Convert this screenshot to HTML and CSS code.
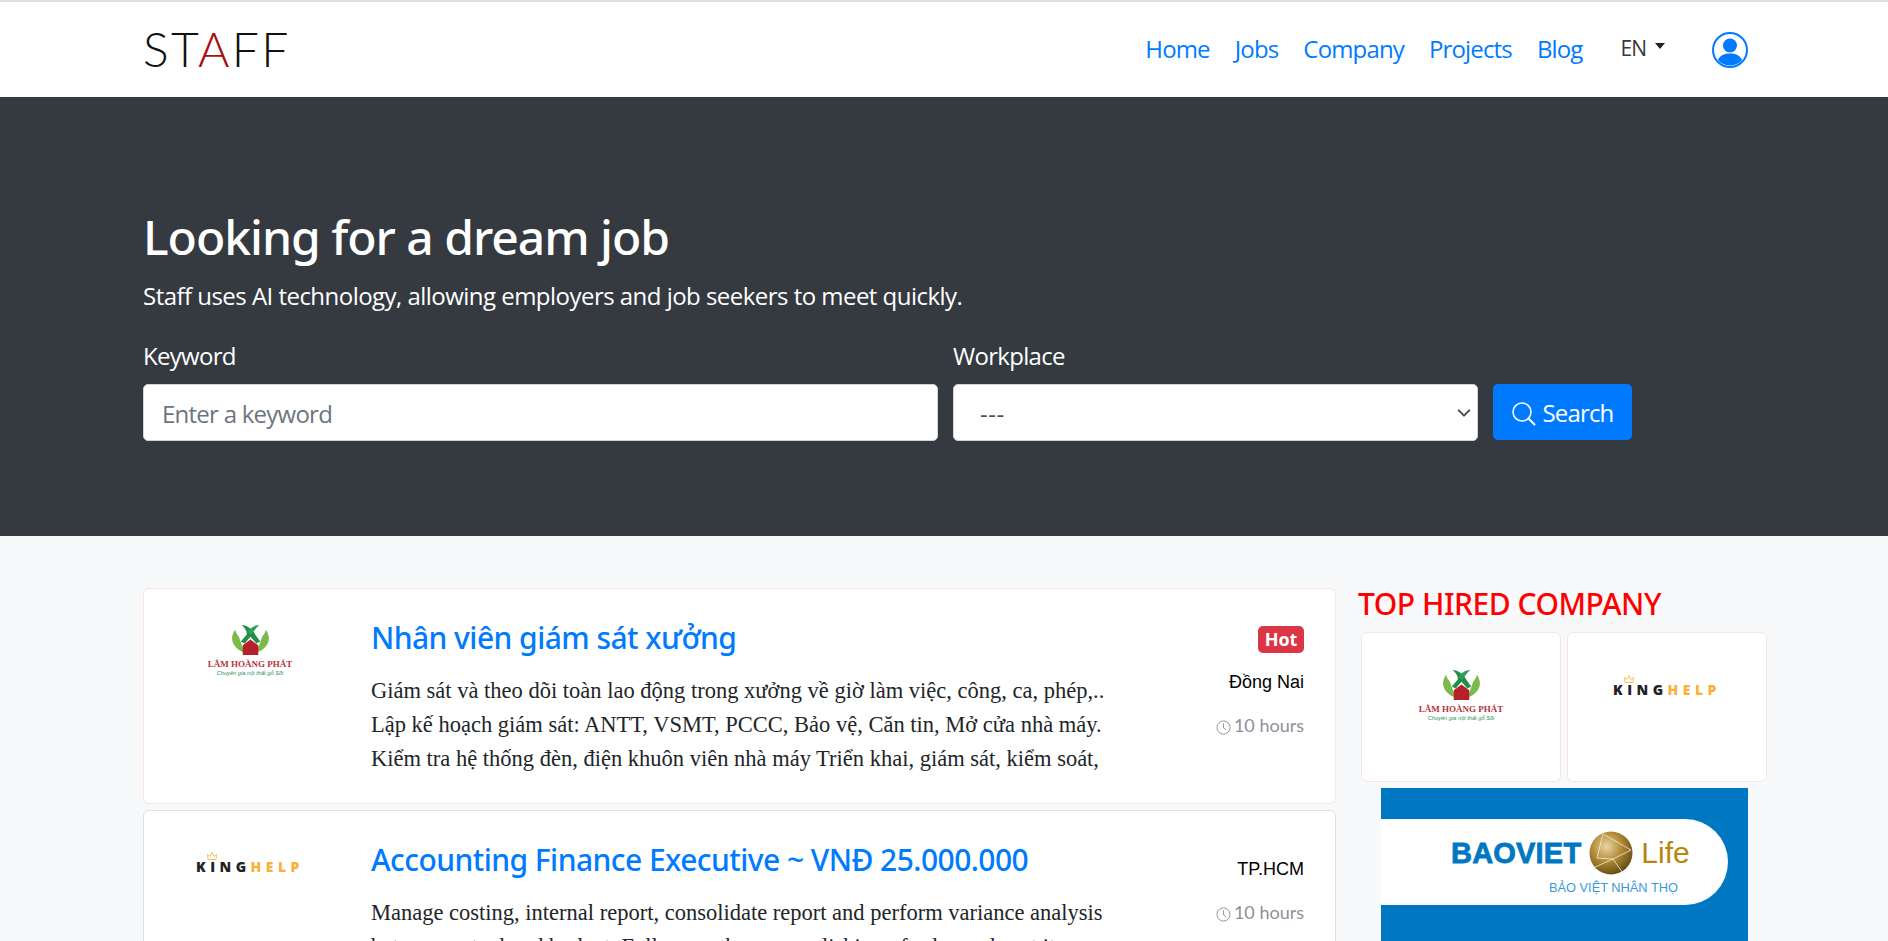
FILE: index.html
```html
<!DOCTYPE html>
<html>
<head>
    <title>Staff</title>
    <link rel="stylesheet" href="styles.css">
</head>
<body>
<nav class="navbar">
    <div class="container nav-inner">
        <a class="brand">ST<span class="brand-red">A</span>FF</a>
        <ul class="nav-links">
            <li><a>Home</a></li>
            <li><a>Jobs</a></li>
            <li><a>Company</a></li>
            <li><a>Projects</a></li>
            <li><a>Blog</a></li>
        </ul>
        <div class="lang">EN<span class="caret"></span></div>
        <svg class="user-icon" viewBox="0 0 36 36">
            <circle cx="18" cy="18" r="17" fill="#fff" stroke="#007bff" stroke-width="2"/>
            <circle cx="18" cy="13.500" r="7" fill="#007bff"/>
            <path d="M6 28c2-5 6.500-6.500 12-6.500s10 1.500 12 6.500c-3 3.600-7.300 5.500-12 5.500s-9-1.900-12-5.500z" fill="#007bff"/>
        </svg>
    </div>
</nav>

<section class="hero">
    <div class="container">
        <h1>Looking for a dream job</h1>
        <p class="lead">Staff uses AI technology, allowing employers and job seekers to meet quickly.</p>
        <form class="search-form">
            <div class="field field-keyword">
                <label>Keyword</label>
                <div class="control placeholder">Enter a keyword</div>
            </div>
            <div class="field field-place">
                <label>Workplace</label>
                <div class="control select">
                    <span>---</span>
                    <svg class="chevron" viewBox="0 0 16 16"><path d="M2 5l6 6 6-6" fill="none" stroke="#495057" stroke-width="2.400" stroke-linecap="round" stroke-linejoin="round"/></svg>
                </div>
            </div>
            <button type="button" class="search-btn">
                <svg viewBox="0 0 24 24"><circle cx="10" cy="10" r="9" fill="none" stroke="#fff" stroke-width="1.500"/><path d="M16.500 16.500l6 6" stroke="#fff" stroke-width="2" stroke-linecap="round"/></svg>
                Search
            </button>
        </form>
    </div>
</section>

<main class="container content">
    <div class="job-list">
        <div class="job-card job-card-hot">
            <div class="job-logo">
                <div class="logo-lhp">
                    <svg class="lhp-mark" viewBox="0 0 40 32">
                        <path d="M15 29C8 27 2 22 1 15c-.3-3 1-7 3-10 1 3 2 5 4 7 2 6 4 12 7 17z" fill="#7cba4a"/>
                        <path d="M25 29c7-2 13-7 14-14 .3-3-1-7-3-10-1 3-2 5-4 7-2 6-4 12-7 17z" fill="#7cba4a"/>
                        <path d="M11 0c5 0 11 4 14 10l5 7-4 2-6-7-6 7-4-2 6-7C17 7 14 3 11 0z" fill="#1f8f4b"/>
                        <path d="M29 0c-5 0-9 3-12 7l3 3 3-3c2-3 4-5 6-7z" fill="#2fa155"/>
                        <path d="M20 15l8 6v10H12V21z" fill="#b5202a"/>
                    </svg>
                    <span class="lhp-name">LÂM HOÀNG PHÁT</span>
                    <span class="lhp-tag">Chuyên gia nội thất gỗ Sồi</span>
                </div>
            </div>
            <div class="job-body">
                <h3><a>Nhân viên giám sát xưởng</a></h3>
                <p>Giám sát và theo dõi toàn lao động trong xưởng về giờ làm việc, công, ca, phép,..<br>
                Lập kế hoạch giám sát: ANTT, VSMT, PCCC, Bảo vệ, Căn tin, Mở cửa nhà máy.<br>
                Kiểm tra hệ thống đèn, điện khuôn viên nhà máy Triển khai, giám sát, kiểm soát,</p>
            </div>
            <div class="job-meta">
                <span class="badge">Hot</span>
                <span class="place">Đồng Nai</span>
                <span class="ago">
                    <svg viewBox="0 0 16 16"><circle cx="8" cy="8" r="7" fill="none" stroke="#8f8f99" stroke-width="1"/><path d="M8 3.500V8.500l3 2" fill="none" stroke="#8f8f99"/></svg>
                    10 hours
                </span>
            </div>
        </div>
        <div class="job-card">
            <div class="job-logo">
                <div class="logo-king">
                    <svg class="crown" viewBox="0 0 10 8"><path d="M1 7.500L.5 2.500l2.500 2L5 .5l2 4 2.500-2L9 7.500z" fill="none" stroke="#fbb03b" stroke-width="0.800"/></svg>
                    KING<span class="king-help">HELP</span>
                </div>
            </div>
            <div class="job-body">
                <h3><a>Accounting Finance Executive ~ VNĐ 25.000.000</a></h3>
                <p>Manage costing, internal report, consolidate report and perform variance analysis<br>
                between actual and budget. Follow up the accomplishing of sales and cost item</p>
            </div>
            <div class="job-meta">
                <span class="place">TP.HCM</span>
                <span class="ago">
                    <svg viewBox="0 0 16 16"><circle cx="8" cy="8" r="7" fill="none" stroke="#8f8f99" stroke-width="1"/><path d="M8 3.500V8.500l3 2" fill="none" stroke="#8f8f99"/></svg>
                    10 hours
                </span>
            </div>
        </div>
    </div>

    <aside class="sidebar">
        <h4>TOP HIRED COMPANY</h4>
        <div class="company-grid">
            <div class="company-card">
                <div class="logo-lhp">
                    <svg class="lhp-mark" viewBox="0 0 40 32">
                        <path d="M15 29C8 27 2 22 1 15c-.3-3 1-7 3-10 1 3 2 5 4 7 2 6 4 12 7 17z" fill="#7cba4a"/>
                        <path d="M25 29c7-2 13-7 14-14 .3-3-1-7-3-10-1 3-2 5-4 7-2 6-4 12-7 17z" fill="#7cba4a"/>
                        <path d="M11 0c5 0 11 4 14 10l5 7-4 2-6-7-6 7-4-2 6-7C17 7 14 3 11 0z" fill="#1f8f4b"/>
                        <path d="M29 0c-5 0-9 3-12 7l3 3 3-3c2-3 4-5 6-7z" fill="#2fa155"/>
                        <path d="M20 15l8 6v10H12V21z" fill="#b5202a"/>
                    </svg>
                    <span class="lhp-name">LÂM HOÀNG PHÁT</span>
                    <span class="lhp-tag">Chuyên gia nội thất gỗ Sồi</span>
                </div>
            </div>
            <div class="company-card">
                <div class="logo-king">
                    <svg class="crown" viewBox="0 0 10 8"><path d="M1 7.500L.5 2.500l2.500 2L5 .5l2 4 2.500-2L9 7.500z" fill="none" stroke="#fbb03b" stroke-width="0.800"/></svg>
                    KING<span class="king-help">HELP</span>
                </div>
            </div>
        </div>
        <div class="banner">
            <div class="banner-pill">
                <div class="bv-row">
                    <span class="bv-name">BAOVIET</span>
                    <svg class="bv-globe" viewBox="0 0 44 44">
                        <defs>
                            <radialGradient id="globe" cx="40%" cy="35%" r="70%">
                                <stop offset="0" stop-color="#ead6a4"/>
                                <stop offset="0.500" stop-color="#b08a35"/>
                                <stop offset="1" stop-color="#5f4712"/>
                            </radialGradient>
                        </defs>
                        <circle cx="22" cy="22" r="21.500" fill="url(#globe)"/>
                        <path d="M14 3l28 16-18 9-20 9M14 3l-6 24 16 1 10 14" fill="none" stroke="#f4ecd6" stroke-width="0.800"/>
                    </svg>
                    <span class="bv-life">Life</span>
                </div>
                <div class="bv-sub">BẢO VIỆT NHÂN THỌ</div>
            </div>
        </div>
    </aside>
</main>
</body>
</html>
```

FILE: styles.css
```css
* {
    box-sizing: border-box;
}

html, body {
    height: 941px;
    margin: 0;
    padding: 0;
    overflow: hidden;
}

body {
    background: #f8f9fa;
    font-family: "Open Sans", "Noto Sans", Arial, sans-serif;
    font-size: 24px;
    color: #212529;
}

.container {
    width: 1888px;
    padding: 0 120px 0 143px;
}

/* top nav */
.navbar {
    height: 97px;
    background: #fff;
    border-top: 2px solid #e0e0e0;
}

.nav-inner {
    display: flex;
    align-items: center;
    height: 95px;
}

.brand {
    font-family: Lato, "Open Sans", sans-serif;
    font-weight: 300;
    font-size: 48px;
    line-height: 1;
    letter-spacing: 2.400px;
    color: #111;
    margin-top: -1px;
}

.brand-red {
    color: #a80f0f;
}

.nav-links {
    display: flex;
    gap: 25px;
    list-style: none;
    margin: -2px 0 0 auto;
    padding: 0;
}

.nav-links a {
    color: #007bff;
    font-size: 24px;
    letter-spacing: -0.850px;
}

.lang {
    display: flex;
    align-items: center;
    margin-left: 38px;
    margin-top: -4px;
    font-size: 21px;
    letter-spacing: -1px;
    color: #343a40;
}

.caret {
    margin-left: 9px;
    margin-top: -3px;
    border-top: 6px solid #212529;
    border-left: 5.500px solid transparent;
    border-right: 5.500px solid transparent;
}

.user-icon {
    width: 36px;
    height: 36px;
    margin-left: 47px;
    margin-right: 20px;
}

/* hero */
.hero {
    height: 439px;
    background: #343a40;
    color: #fff;
    padding-top: 112px;
}

.hero h1 {
    margin: 0;
    font-family: "Noto Sans", "Open Sans", sans-serif;
    font-size: 48px;
    line-height: 56px;
    font-weight: 500;
    letter-spacing: -1.030px;
}

.lead {
    margin: 13px 0 0;
    font-size: 24px;
    line-height: 36px;
    letter-spacing: -0.530px;
}

.search-form {
    display: flex;
    align-items: flex-end;
    gap: 15px;
    margin-top: 24px;
}

.field label {
    display: block;
    font-size: 24px;
    line-height: 36px;
    margin-bottom: 10px;
    letter-spacing: -0.700px;
}

.field-keyword {
    width: 795px;
}

.field-place {
    width: 525px;
}

.control {
    display: flex;
    align-items: center;
    justify-content: space-between;
    height: 57px;
    padding: 1px 6px 0 18px;
    background: #fff;
    border: 1px solid #ced4da;
    border-radius: 5px;
    font-size: 24px;
    letter-spacing: -0.750px;
    color: #495057;
}

.select {
    padding-left: 26px;
    letter-spacing: 0.500px;
}

.placeholder {
    color: #6c757d;
}

.chevron {
    width: 14px;
    height: 14px;
}

.search-btn {
    display: flex;
    align-items: center;
    justify-content: center;
    gap: 7px;
    width: 139px;
    height: 56px;
    margin-bottom: 1px;
    background: #007bff;
    border: none;
    border-radius: 5px;
    color: #fff;
    font-family: inherit;
    font-size: 24px;
    letter-spacing: -0.850px;
}

.search-btn svg {
    width: 24px;
    height: 24px;
    margin-top: 3px;
}

/* job list */
.content {
    display: flex;
    align-items: flex-start;
    padding-top: 52px;
}

.job-list {
    display: flex;
    flex-direction: column;
    gap: 6px;
    width: 1193px;
    flex-shrink: 0;
}

.job-card {
    display: flex;
    height: 240px;
    background: #fff;
    border: 1px solid #dfdfdf;
    border-radius: 6px;
}

.job-card-hot {
    height: 216px;
    border-color: #fbe3e3;
}

.job-logo {
    display: flex;
    justify-content: center;
    width: 212px;
    margin-right: 15px;
    padding-top: 36px;
    flex-shrink: 0;
}

.job-body {
    flex: 1;
    padding-top: 28px;
    white-space: nowrap;
}

.job-body h3 {
    margin: 0;
    font-family: "Noto Sans", "Open Sans", sans-serif;
    font-size: 30px;
    line-height: 42px;
    font-weight: 500;
    letter-spacing: -0.550px;
}

.job-body a {
    color: #007bff;
}

.job-body p {
    margin: 15px 0 0;
    font-family: "Liberation Serif", "Times New Roman", serif;
    font-size: 22.500px;
    line-height: 34px;
}

.job-meta {
    display: flex;
    flex-direction: column;
    align-items: flex-end;
    width: 200px;
    padding: 45px 31px 0 0;
    flex-shrink: 0;
}

.job-card-hot .job-meta {
    padding-top: 37px;
}

.badge {
    width: 46px;
    height: 27px;
    line-height: 26px;
    text-align: center;
    background: #dc3545;
    border-radius: 5px;
    color: #fff;
    font-size: 18px;
    font-weight: 700;
    margin-bottom: 16px;
}

.place {
    font-family: "Liberation Sans", Arial, sans-serif;
    font-size: 18px;
    line-height: 27px;
    color: #000;
}

.ago {
    display: flex;
    align-items: center;
    gap: 3px;
    margin-top: 16px;
    font-family: Lato, sans-serif;
    font-size: 18px;
    line-height: 27px;
    color: #8f8f99;
}

.ago svg {
    width: 15px;
    height: 15px;
    margin-top: 3px;
}

/* logos */
.logo-lhp {
    display: flex;
    flex-direction: column;
    align-items: center;
    width: 90px;
}

.lhp-mark {
    width: 39px;
    height: 31px;
}

.lhp-name {
    font-family: "Liberation Serif", serif;
    font-size: 9px;
    line-height: 11px;
    font-weight: 700;
    color: #b5343c;
    white-space: nowrap;
    margin-top: 3px;
}

.lhp-tag {
    font-family: "Liberation Sans", sans-serif;
    font-size: 5.700px;
    line-height: 6px;
    font-style: italic;
    color: #2f8f5b;
    white-space: nowrap;
}

.logo-king {
    position: relative;
    height: 22px;
    margin-top: 9px;
    font-family: "Open Sans", sans-serif;
    font-weight: 800;
    font-size: 14px;
    line-height: 22px;
    letter-spacing: 4.500px;
    color: #222;
}

.king-help {
    color: #fbb03b;
}

.crown {
    position: absolute;
    top: -4px;
    left: 11px;
    width: 10px;
    height: 8px;
}

/* right column */
.sidebar {
    width: 432px;
    padding-left: 22px;
}

.sidebar h4 {
    margin: 0;
    font-family: "Noto Sans", "Open Sans", sans-serif;
    font-size: 30px;
    line-height: 32px;
    font-weight: 500;
    color: #f00;
    letter-spacing: -0.480px;
}

.company-grid {
    display: flex;
    gap: 6px;
    margin: 12px 0 0 3px;
}

.company-card {
    display: flex;
    justify-content: center;
    width: 200px;
    height: 150px;
    padding-top: 37px;
    background: #fff;
    border: 1px solid #fbe3e3;
    border-radius: 6px;
}

.banner {
    width: 367px;
    height: 153px;
    margin: 6px 0 0 23px;
    padding-top: 31px;
    background: #0077c3;
}

.banner-pill {
    width: 347px;
    height: 86px;
    padding: 12px 0 0 70px;
    background: #fff;
    border-radius: 0 43px 43px 0;
}

.bv-row {
    display: flex;
    align-items: center;
    height: 44px;
}

.bv-name {
    font-family: "Liberation Sans", sans-serif;
    font-weight: 700;
    font-size: 29px;
    letter-spacing: 0.200px;
    color: #0077c3;
    -webkit-text-stroke: 0.800px #0077c3;
}

.bv-globe {
    width: 44px;
    height: 44px;
    margin-left: 8px;
}

.bv-life {
    margin-left: 8px;
    font-family: "Liberation Sans", sans-serif;
    font-size: 30px;
    color: #b8860b;
}

.bv-sub {
    margin: 4px 0 0 98px;
    font-family: "Liberation Sans", sans-serif;
    font-size: 12.800px;
    line-height: 18px;
    color: #3a9ad9;
}
```
